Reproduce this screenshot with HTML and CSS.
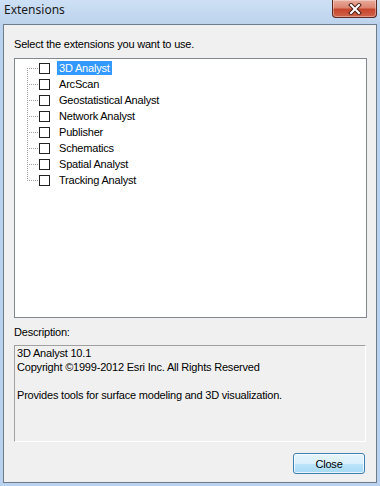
FILE: index.html
```html
<!DOCTYPE html>
<html lang="en">
<head>
    <meta charset="UTF-8">
    <meta name="viewport" content="width=device-width, initial-scale=1.0">
    <title>Extensions</title>
    <link rel="stylesheet" href="styles.css">
</head>
<body>
    <div class="window">
        <div class="titlebar">
            <span class="title">Extensions</span>
            <div class="close-x">
                <svg width="14" height="12" viewBox="0 0 14 12">
                    <path d="M3 2 L11 10 M11 2 L3 10" stroke="#4a1f17" stroke-width="4" stroke-linecap="square" fill="none"/>
                    <path d="M3 2 L11 10 M11 2 L3 10" stroke="#ffffff" stroke-width="2" stroke-linecap="square" fill="none"/>
                </svg>
            </div>
        </div>

        <div class="client">
            <p class="prompt">Select the extensions you want to use.</p>

            <div class="listbox">
                <ul class="tree">
                    <li><span class="check"></span><span class="label selected">3D Analyst</span></li>
                    <li><span class="check"></span><span class="label">ArcScan</span></li>
                    <li><span class="check"></span><span class="label">Geostatistical Analyst</span></li>
                    <li><span class="check"></span><span class="label">Network Analyst</span></li>
                    <li><span class="check"></span><span class="label">Publisher</span></li>
                    <li><span class="check"></span><span class="label">Schematics</span></li>
                    <li><span class="check"></span><span class="label">Spatial Analyst</span></li>
                    <li><span class="check"></span><span class="label">Tracking Analyst</span></li>
                </ul>
            </div>

            <p class="desc-label">Description:</p>
            <div class="desc">
                3D Analyst 10.1<br>
                Copyright ©1999-2012 Esri Inc. All Rights Reserved<br>
                <br>
                Provides tools for surface modeling and 3D visualization.
            </div>

            <div class="actions">
                <button class="btn">Close</button>
            </div>
        </div>
    </div>
</body>
</html>
```

FILE: styles.css
```css
body {
    margin: 0;
    width: 380px;
    height: 486px;
    overflow: hidden;
    background-color: #b9d2ef;
    font-family: 'Liberation Sans', Arial, sans-serif;
    font-size: 11px;
    letter-spacing: -0.2px;
    color: #000;
}
.window {
    height: 486px;
    display: flex;
    flex-direction: column;
}
.titlebar {
    height: 24px;
    display: flex;
    align-items: flex-start;
    padding-left: 4px;
    background: linear-gradient(#cde0f5, #c3d8f0 60%, #bdd2ec);
}
.title {
    font-family: 'Noto Sans', 'Open Sans', sans-serif;
    font-size: 12px;
    letter-spacing: 0;
    line-height: 20px;
    color: #1a1a1a;
}
.close-x {
    margin-left: auto;
    margin-right: 3px;
    width: 43px;
    height: 17px;
    display: flex;
    align-items: center;
    justify-content: center;
    border: 1px solid #5b2a20;
    border-top: none;
    border-radius: 0 0 4px 4px;
    background: linear-gradient(#e9ab9b, #dc8571 45%, #c6462d 55%, #d0634a);
    box-shadow: inset 0 0 0 1px rgba(255, 255, 255, 0.35);
}
.client {
    flex: 1;
    margin: 0 3px 3px 3px;
    padding: 13px 9px 0 10px;
    border: 1px solid #6d7b8a;
    background-color: #f0f0f0;
}
.prompt {
    margin: 0 0 7px;
    line-height: 13px;
}
.listbox {
    height: 260px;
    box-sizing: border-box;
    padding-top: 1px;
    border: 1px solid #828790;
    background-color: #fff;
}
.tree {
    list-style: none;
    margin: 0;
    padding: 0;
    background: repeating-linear-gradient(to bottom, #a0a0a0 0 1px, transparent 1px 2px) 12px 8px / 1px 113px no-repeat;
}
.tree li {
    height: 16px;
    display: flex;
    align-items: center;
    padding-left: 24px;
    background: repeating-linear-gradient(to right, #a0a0a0 0 1px, transparent 1px 2px) 12px 8px / 12px 1px no-repeat;
}
.check {
    width: 11px;
    height: 11px;
    box-sizing: border-box;
    border: 1px solid #222;
    background-color: #fff;
}
.label {
    margin-left: 7px;
    padding: 0 2px;
    line-height: 14px;
}
.label.selected {
    background-color: #3399ff;
    color: #fff;
}
.desc-label {
    margin: 8px 0 6px;
    line-height: 13px;
}
.desc {
    width: 352px;
    height: 97px;
    box-sizing: border-box;
    padding: 0 2px;
    line-height: 14px;
    border: 1px solid;
    border-color: #a0a0a0 #fff #fff #a0a0a0;
}
.actions {
    display: flex;
    justify-content: flex-end;
    margin-top: 11px;
    padding-right: 2px;
}
.btn {
    width: 72px;
    height: 21px;
    padding: 0;
    font-family: 'Liberation Sans', Arial, sans-serif;
    font-size: 11px;
    letter-spacing: -0.2px;
    color: #000;
    border: 1px solid #3c7fb1;
    border-radius: 3px;
    background: linear-gradient(#e6f5fd, #d9f0fc 50%, #bee6fd 50%, #a7d9f5);
    box-shadow: inset 0 0 0 1px rgba(255, 255, 255, 0.7);
}
```
